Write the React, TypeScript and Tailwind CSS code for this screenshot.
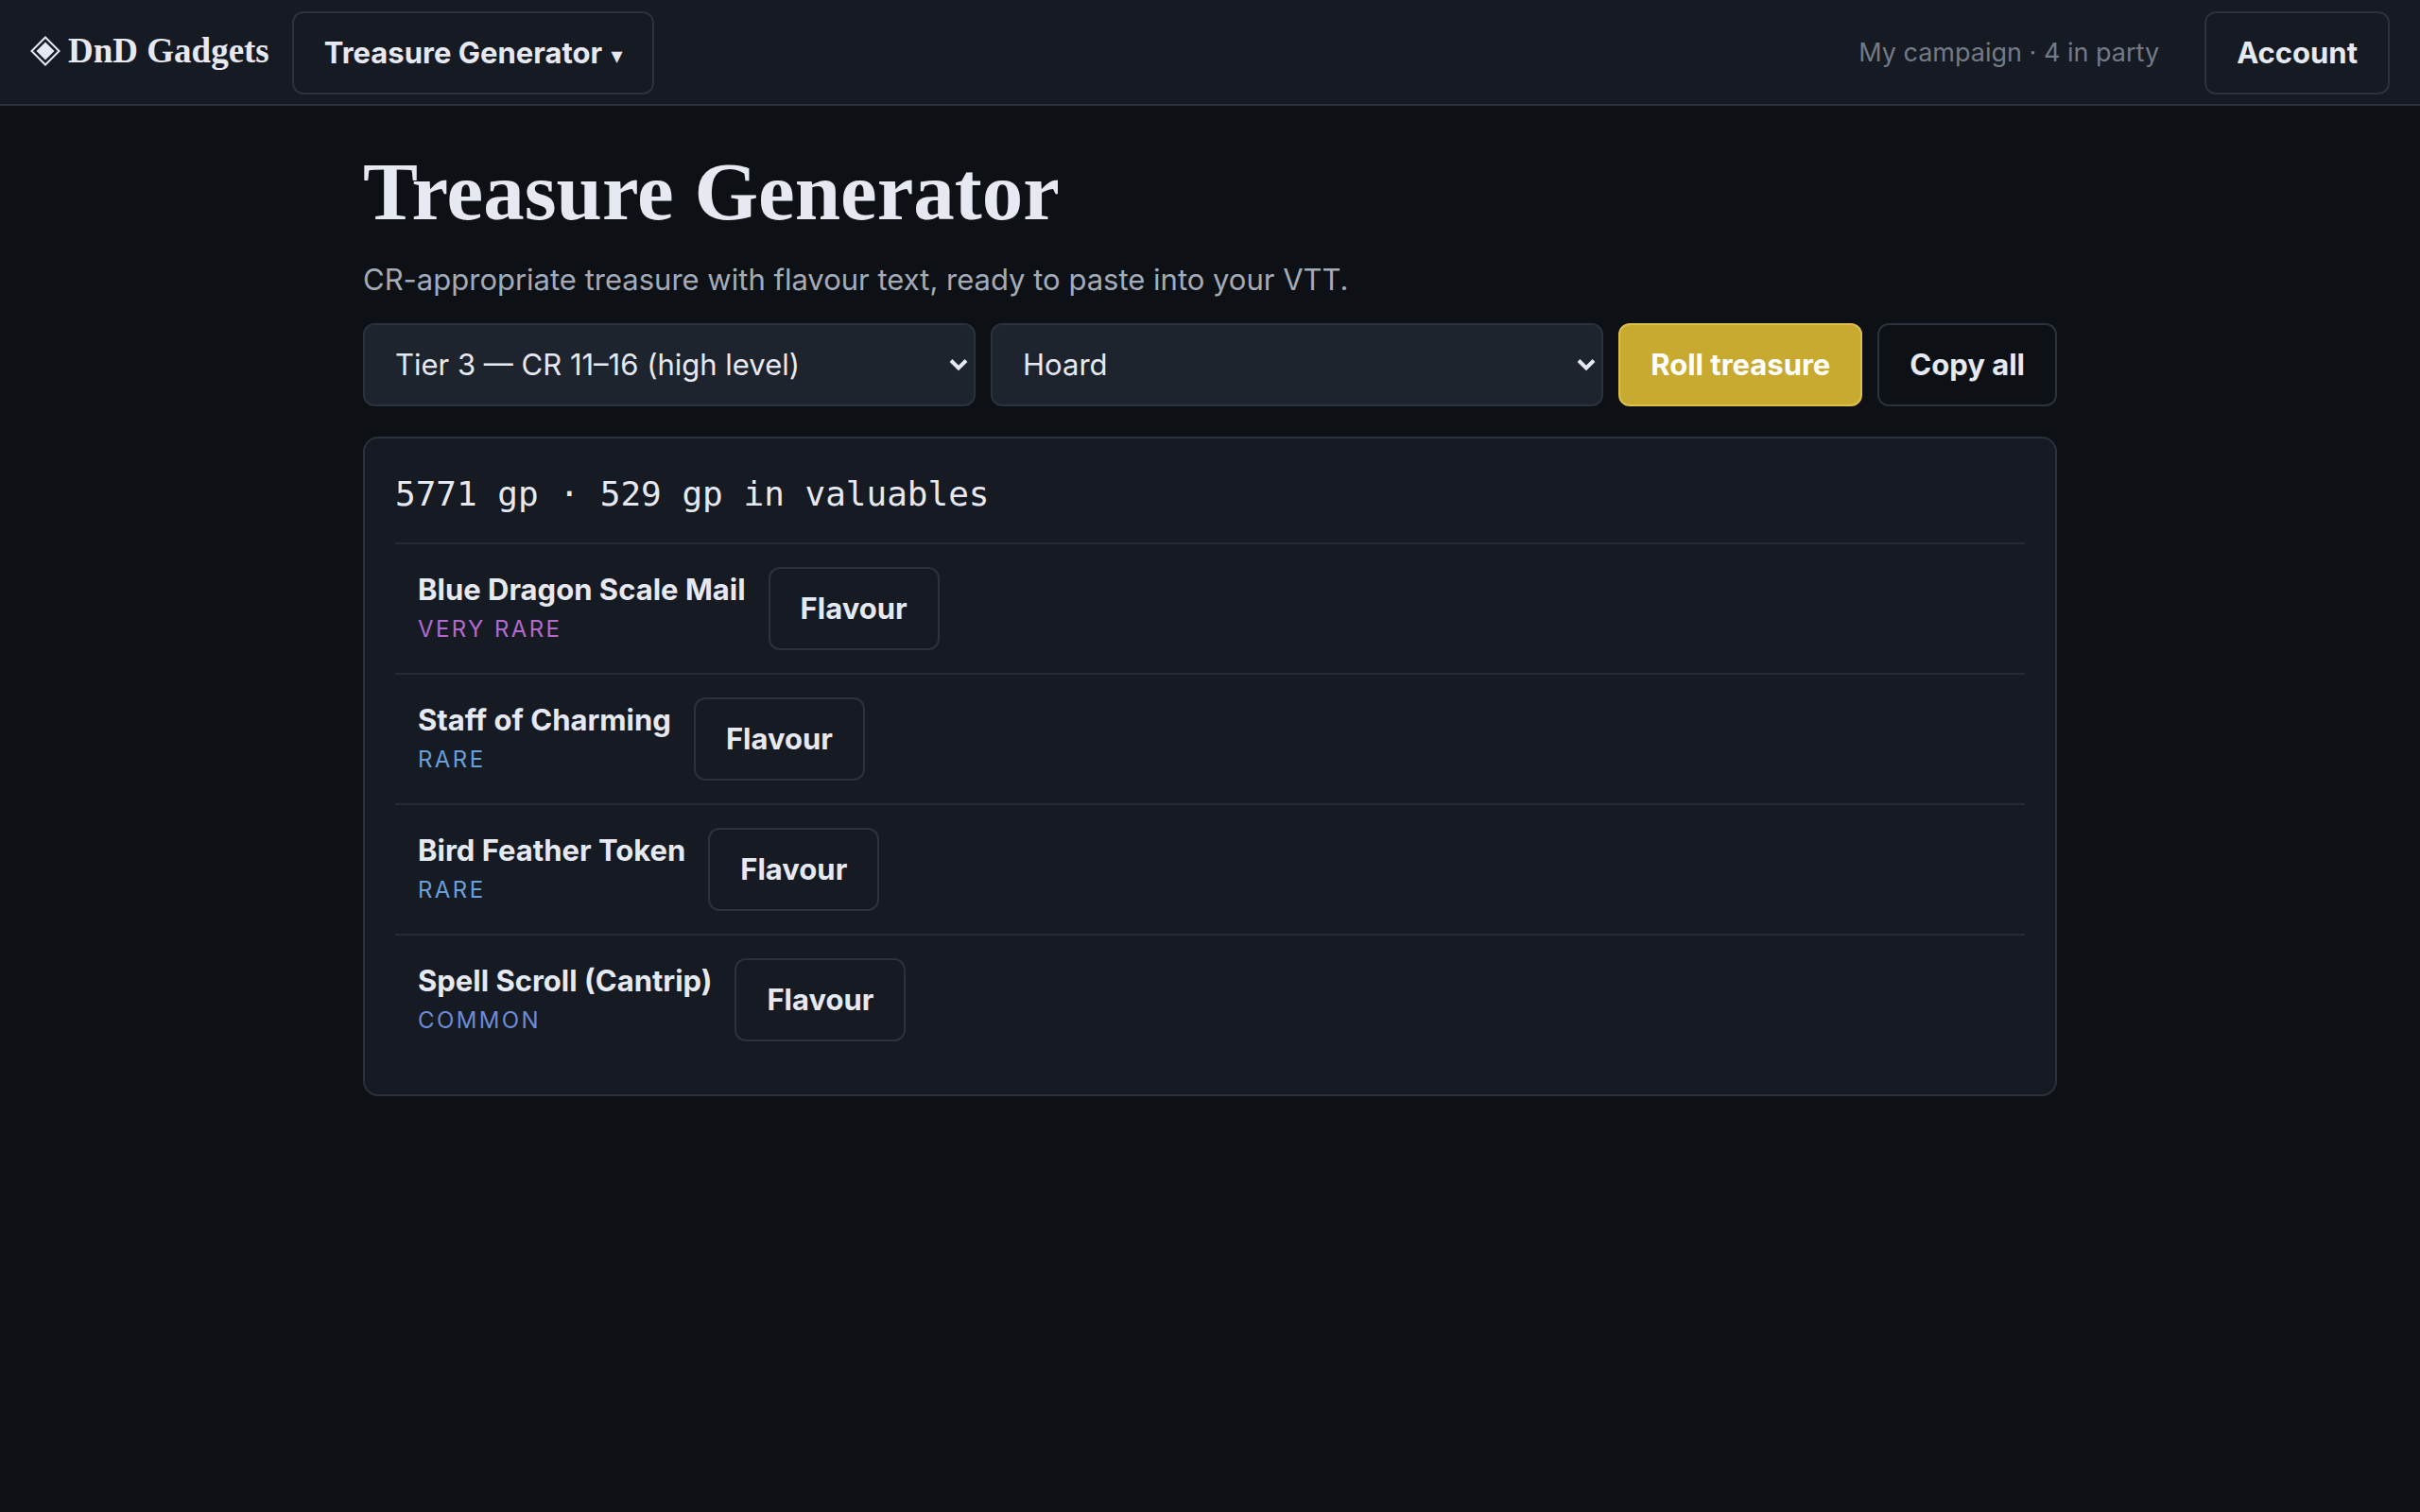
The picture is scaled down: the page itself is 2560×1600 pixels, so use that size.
import React from "react";

type Item = { name: string; rarity: string; tone: string };

const items: Item[] = [
  { name: "Blue Dragon Scale Mail", rarity: "Very rare", tone: "text-[#b36ad0]" },
  { name: "Staff of Charming", rarity: "Rare", tone: "text-[#6aa0d8]" },
  { name: "Bird Feather Token", rarity: "Rare", tone: "text-[#6aa0d8]" },
  { name: "Spell Scroll (Cantrip)", rarity: "Common", tone: "text-[#6d8bd6]" },
];

function Button({ children, primary = false }: { children: React.ReactNode; primary?: boolean }) {
  const tone = primary
    ? "border-[#dcc04c] bg-[#c9aa30] text-white"
    : "border-[#2b323d] text-[#e6e9f2]";
  return (
    <button
      type="button"
      className={`h-22 shrink-0 cursor-pointer whitespace-nowrap rounded-xl border-2 px-8 text-[31px] font-[650] ${tone}`}
    >
      {children}
    </button>
  );
}

function Select({ label, options }: { label: string; options: string[] }) {
  return (
    <div className="relative min-w-0 flex-1">
      <select
        aria-label={label}
        className="h-22 w-full appearance-none rounded-xl border-2 border-[#2b323d] bg-[#1e242e] pl-8 pr-12 text-[31px] text-[#e6e9f2]"
      >
        {options.map((option) => (
          <option key={option}>{option}</option>
        ))}
      </select>
      <svg
        aria-hidden="true"
        viewBox="0 0 20 14"
        className="pointer-events-none absolute top-[37px] right-2 h-3.5 w-5"
        fill="none"
        stroke="#e6e9f2"
        strokeWidth="4"
      >
        <path d="M2 2.5 10 10.5 18 2.5" />
      </svg>
    </div>
  );
}

export default function App() {
  return (
    <div className="min-h-screen bg-[#0d1115] font-['Inter',sans-serif] text-[31px] text-[#e6e9f2]">
      <header className="flex items-center border-b-2 border-[#2b323d] bg-[#161a22] px-8 pt-3 pb-2.5">
        <a
          href="#"
          className="mr-6 flex items-center gap-2 pb-1 font-['Liberation_Serif',serif] text-[37px] leading-11 font-bold"
        >
          <svg aria-hidden="true" viewBox="0 0 32 32" className="size-8">
            <path d="M16 1.5 30.5 16 16 30.5 1.5 16Z" fill="none" stroke="currentColor" strokeWidth="2" />
            <path d="M16 6.5 25.5 16 16 25.5 6.5 16Z" fill="currentColor" />
          </svg>
          DnD Gadgets
        </a>
        <Button>
          Treasure Generator <span className="ml-0.5 font-['DejaVu_Sans',sans-serif] text-2xl leading-none font-normal">▾</span>
        </Button>
        <span className="mr-12 ml-auto text-[27px] text-[#737a87]">My campaign · 4 in party</span>
        <Button>Account</Button>
      </header>

      <main className="mx-auto w-full max-w-[1792px] pt-[46px]">
        <h1 className="font-['Liberation_Serif',serif] text-[87px] leading-[90px] font-bold">Treasure Generator</h1>
        <p className="mt-6 leading-12 text-[#a3abb9]">
          CR-appropriate treasure with flavour text, ready to paste into your VTT.
        </p>
        <div className="mt-[22px] flex gap-4">
          <Select label="Tier" options={["Tier 3 — CR 11–16 (high level)"]} />
          <Select label="Treasure type" options={["Hoard"]} />
          <Button primary>Roll treasure</Button>
          <Button>Copy all</Button>
        </div>

        <section className="mt-8 rounded-2xl border-2 border-[#2b323d] bg-[#161a22] p-8">
          <p className="mb-6 font-['DejaVu_Sans_Mono',monospace] text-4xl leading-[54px]">
            5771 gp · 529 gp in valuables
          </p>
          <ul>
            {items.map((item) => (
              <li key={item.name} className="flex items-center gap-6 border-t-2 border-[#252b35] p-6">
                <div>
                  <div className="leading-11 font-[650]">{item.name}</div>
                  <div className={`text-2xl leading-10 tracking-widest uppercase ${item.tone}`}>{item.rarity}</div>
                </div>
                <Button>Flavour</Button>
              </li>
            ))}
          </ul>
        </section>
      </main>
    </div>
  );
}
